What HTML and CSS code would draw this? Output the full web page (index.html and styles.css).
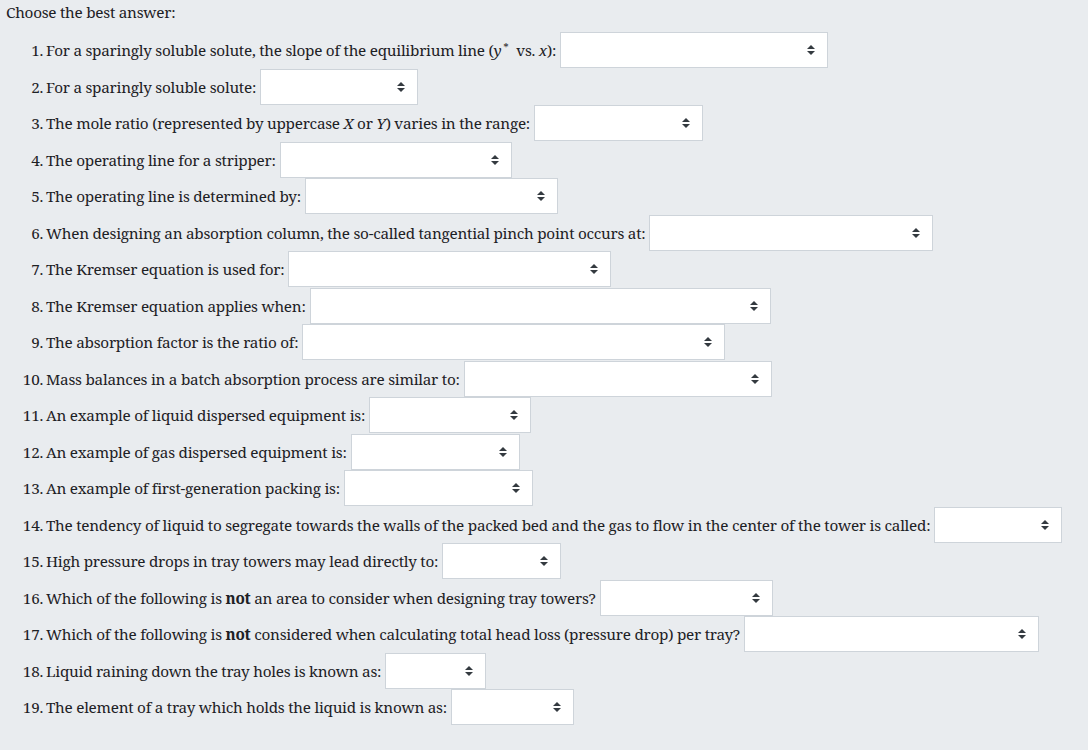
FILE: index.html
```html
<!DOCTYPE html>
<html>
<head>
<meta charset="utf-8">
<link rel="stylesheet" href="styles.css">
</head>
<body>
<div class="wrap">
  <p class="intro">Choose the best answer:</p>
  <ol class="list">
    <li class="q"><span class="num">1.</span><span class="lbl">For a sparingly soluble solute, the slope of the equilibrium line (<i class="m">y</i><sup>*</sup> vs. <i class="m">x</i>):</span><span class="sel s1"><svg class="arr" width="8" height="10" viewBox="0 0 8 10"><path d="M0 4L4 0L8 4Z M0 6L4 10L8 6Z"/></svg></span></li>
    <li class="q"><span class="num">2.</span><span class="lbl">For a sparingly soluble solute:</span><span class="sel s2"><svg class="arr" width="8" height="10" viewBox="0 0 8 10"><path d="M0 4L4 0L8 4Z M0 6L4 10L8 6Z"/></svg></span></li>
    <li class="q"><span class="num">3.</span><span class="lbl">The mole ratio (represented by uppercase <i class="m">X</i> or <i class="m">Y</i>) varies in the range:</span><span class="sel s3"><svg class="arr" width="8" height="10" viewBox="0 0 8 10"><path d="M0 4L4 0L8 4Z M0 6L4 10L8 6Z"/></svg></span></li>
    <li class="q"><span class="num">4.</span><span class="lbl">The operating line for a stripper:</span><span class="sel s4"><svg class="arr" width="8" height="10" viewBox="0 0 8 10"><path d="M0 4L4 0L8 4Z M0 6L4 10L8 6Z"/></svg></span></li>
    <li class="q"><span class="num">5.</span><span class="lbl">The operating line is determined by:</span><span class="sel s5"><svg class="arr" width="8" height="10" viewBox="0 0 8 10"><path d="M0 4L4 0L8 4Z M0 6L4 10L8 6Z"/></svg></span></li>
    <li class="q"><span class="num">6.</span><span class="lbl">When designing an absorption column, the so-called tangential pinch point occurs at:</span><span class="sel s6"><svg class="arr" width="8" height="10" viewBox="0 0 8 10"><path d="M0 4L4 0L8 4Z M0 6L4 10L8 6Z"/></svg></span></li>
    <li class="q"><span class="num">7.</span><span class="lbl">The Kremser equation is used for:</span><span class="sel s7"><svg class="arr" width="8" height="10" viewBox="0 0 8 10"><path d="M0 4L4 0L8 4Z M0 6L4 10L8 6Z"/></svg></span></li>
    <li class="q"><span class="num">8.</span><span class="lbl">The Kremser equation applies when:</span><span class="sel s8"><svg class="arr" width="8" height="10" viewBox="0 0 8 10"><path d="M0 4L4 0L8 4Z M0 6L4 10L8 6Z"/></svg></span></li>
    <li class="q"><span class="num">9.</span><span class="lbl">The absorption factor is the ratio of:</span><span class="sel s9"><svg class="arr" width="8" height="10" viewBox="0 0 8 10"><path d="M0 4L4 0L8 4Z M0 6L4 10L8 6Z"/></svg></span></li>
    <li class="q"><span class="num">10.</span><span class="lbl">Mass balances in a batch absorption process are similar to:</span><span class="sel s10"><svg class="arr" width="8" height="10" viewBox="0 0 8 10"><path d="M0 4L4 0L8 4Z M0 6L4 10L8 6Z"/></svg></span></li>
    <li class="q"><span class="num">11.</span><span class="lbl">An example of liquid dispersed equipment is:</span><span class="sel s11"><svg class="arr" width="8" height="10" viewBox="0 0 8 10"><path d="M0 4L4 0L8 4Z M0 6L4 10L8 6Z"/></svg></span></li>
    <li class="q"><span class="num">12.</span><span class="lbl">An example of gas dispersed equipment is:</span><span class="sel s12"><svg class="arr" width="8" height="10" viewBox="0 0 8 10"><path d="M0 4L4 0L8 4Z M0 6L4 10L8 6Z"/></svg></span></li>
    <li class="q"><span class="num">13.</span><span class="lbl">An example of first-generation packing is:</span><span class="sel s13"><svg class="arr" width="8" height="10" viewBox="0 0 8 10"><path d="M0 4L4 0L8 4Z M0 6L4 10L8 6Z"/></svg></span></li>
    <li class="q"><span class="num">14.</span><span class="lbl">The tendency of liquid to segregate towards the walls of the packed bed and the gas to flow in the center of the tower is called:</span><span class="sel s14"><svg class="arr" width="8" height="10" viewBox="0 0 8 10"><path d="M0 4L4 0L8 4Z M0 6L4 10L8 6Z"/></svg></span></li>
    <li class="q"><span class="num">15.</span><span class="lbl">High pressure drops in tray towers may lead directly to:</span><span class="sel s15"><svg class="arr" width="8" height="10" viewBox="0 0 8 10"><path d="M0 4L4 0L8 4Z M0 6L4 10L8 6Z"/></svg></span></li>
    <li class="q"><span class="num">16.</span><span class="lbl">Which of the following is <b>not</b> an area to consider when designing tray towers?</span><span class="sel s16"><svg class="arr" width="8" height="10" viewBox="0 0 8 10"><path d="M0 4L4 0L8 4Z M0 6L4 10L8 6Z"/></svg></span></li>
    <li class="q"><span class="num">17.</span><span class="lbl">Which of the following is <b>not</b> considered when calculating total head loss (pressure drop) per tray?</span><span class="sel s17"><svg class="arr" width="8" height="10" viewBox="0 0 8 10"><path d="M0 4L4 0L8 4Z M0 6L4 10L8 6Z"/></svg></span></li>
    <li class="q"><span class="num">18.</span><span class="lbl">Liquid raining down the tray holes is known as:</span><span class="sel s18"><svg class="arr" width="8" height="10" viewBox="0 0 8 10"><path d="M0 4L4 0L8 4Z M0 6L4 10L8 6Z"/></svg></span></li>
    <li class="q"><span class="num">19.</span><span class="lbl">The element of a tray which holds the liquid is known as:</span><span class="sel s19"><svg class="arr" width="8" height="10" viewBox="0 0 8 10"><path d="M0 4L4 0L8 4Z M0 6L4 10L8 6Z"/></svg></span></li>
  </ol>
</div>
</body>
</html>
```
FILE: styles.css
```css
html, body { margin: 0; padding: 0; }
body {
  background: #e9ecef;
  color: #1d2125;
  font-family: "Noto Serif", "DejaVu Serif", serif;
  font-size: 15.3px;
  letter-spacing: -0.26px;
}
.wrap { padding: 0 6px; }
.intro { margin: 0; line-height: 24px; }
.list { list-style: none; margin: 7.75px 0 0; padding: 0; }
.q { display: flex; align-items: center; height: 36.5px; white-space: nowrap; }
.num { width: 37px; margin-right: 3px; text-align: right; flex: none; }
.lbl { flex: none; }
.m { font-style: italic; }
sup { font-size: 11px; vertical-align: 0; position: relative; top: -5px; margin-left: 2px; margin-right: 4px; }
b { font-weight: 700; }
.sel {
  display: inline-flex;
  align-items: center;
  justify-content: flex-end;
  box-sizing: border-box;
  flex: none;
  height: 36px;
  margin-left: 4px;
  background: #fff;
  border: 1px solid #ced4da;
  padding-right: 12px;
}
.arr { fill: #343a40; display: block; }
.s1 { width: 268px; }
.s2 { width: 158px; }
.s3 { width: 169px; }
.s4 { width: 232px; }
.s5 { width: 253px; }
.s6 { width: 284px; }
.s7 { width: 323px; }
.s8 { width: 461px; }
.s9 { width: 423px; }
.s10 { width: 308px; }
.s11 { width: 162px; }
.s12 { width: 169px; }
.s13 { width: 189px; }
.s14 { width: 128px; }
.s15 { width: 119px; }
.s16 { width: 173px; }
.s17 { width: 295px; }
.s18 { width: 101px; }
.s19 { width: 123px; }
```
